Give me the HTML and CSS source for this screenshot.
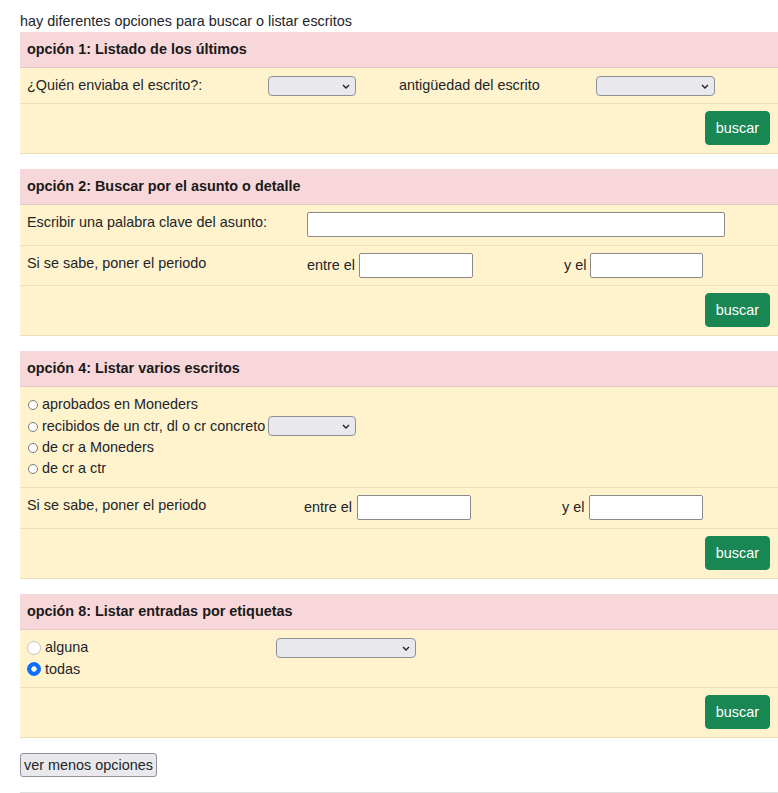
FILE: index.html
```html
<!DOCTYPE html>
<html lang="es">
<head>
<meta charset="utf-8">
<title>Buscar escritos</title>
<link rel="stylesheet" href="styles.css">
</head>
<body>
<div class="page">
  <p class="intro">hay diferentes opciones para buscar o listar escritos</p>

  <section class="opt">
    <div class="opt-head">opción 1: Listado de los últimos</div>
    <div class="row cols-1">
      <div class="c">¿Quién enviaba el escrito?:</div>
      <div class="c"><span class="sel-wrap"><select class="sel w88"></select><svg class="chev" width="8" height="5" viewBox="0 0 8 5"><path d="M1 1 L4 4 L7 1" fill="none" stroke="#222" stroke-width="1.4"/></svg></span></div>
      <div class="c">antigüedad del escrito</div>
      <div class="c"><span class="sel-wrap"><select class="sel w119"></select><svg class="chev" width="8" height="5" viewBox="0 0 8 5"><path d="M1 1 L4 4 L7 1" fill="none" stroke="#222" stroke-width="1.4"/></svg></span></div>
    </div>
    <div class="row row-action"><button class="btn-buscar" type="button">buscar</button></div>
  </section>

  <section class="opt">
    <div class="opt-head">opción 2: Buscar por el asunto o detalle</div>
    <div class="row cols-2 pb8">
      <div class="c">Escribir una palabra clave del asunto:</div>
      <div class="c span2"><input class="txt w418" type="text"></div>
    </div>
    <div class="row cols-2">
      <div class="c">Si se sabe, poner el periodo</div>
      <div class="c inl">entre el <input class="txt w114" type="text"></div>
      <div class="c inl">y el <input class="txt w113" type="text"></div>
    </div>
    <div class="row row-action"><button class="btn-buscar" type="button">buscar</button></div>
  </section>

  <section class="opt">
    <div class="opt-head">opción 4: Listar varios escritos</div>
    <div class="row row-list pb8">
      <label class="line"><input class="radio-sm" type="radio" name="o4">aprobados en Moneders</label>
      <label class="line line-sel"><input class="radio-sm" type="radio" name="o4">recibidos de un ctr, dl o cr concreto<span class="sel-wrap ml"><select class="sel w88"></select><svg class="chev" width="8" height="5" viewBox="0 0 8 5"><path d="M1 1 L4 4 L7 1" fill="none" stroke="#222" stroke-width="1.4"/></svg></span></label>
      <label class="line"><input class="radio-sm" type="radio" name="o4">de cr a Moneders</label>
      <label class="line"><input class="radio-sm" type="radio" name="o4">de cr a ctr</label>
    </div>
    <div class="row cols-4 pb8">
      <div class="c">Si se sabe, poner el periodo</div>
      <div class="c inl g5">entre el <input class="txt w114" type="text"></div>
      <div class="c inl g5">y el <input class="txt w114" type="text"></div>
    </div>
    <div class="row row-action"><button class="btn-buscar" type="button">buscar</button></div>
  </section>

  <section class="opt">
    <div class="opt-head">opción 8: Listar entradas por etiquetas</div>
    <div class="row cols-8">
      <div class="c">
        <label class="line2"><input class="radio-lg" type="radio" name="o8">alguna</label>
        <label class="line2"><input class="radio-lg" type="radio" name="o8" checked>todas</label>
      </div>
      <div class="c"><span class="sel-wrap"><select class="sel w140"></select><svg class="chev" width="8" height="5" viewBox="0 0 8 5"><path d="M1 1 L4 4 L7 1" fill="none" stroke="#222" stroke-width="1.4"/></svg></span></div>
    </div>
    <div class="row row-action"><button class="btn-buscar" type="button">buscar</button></div>
  </section>

  <button class="btn-menos" type="button">ver menos opciones</button>
  <hr class="sep">
</div>
</body>
</html>
```

FILE: styles.css
```css
html, body {
  margin: 0;
  padding: 0;
  background: #fff;
}

body {
  font-family: "Liberation Sans", Arial, sans-serif;
  font-size: 14.4px;
  line-height: 21px;
  color: #212529;
  overflow: hidden;
}

.page {
  padding: 11px 0 0 20px;
  width: 758px;
}

.intro {
  margin: 0;
  line-height: 21px;
}

.opt {
  margin-bottom: 15px;
  background: #fff3cd;
}

.opt-head {
  background: #f8d7da;
  font-weight: bold;
  padding: 7px;
  border-bottom: 1px solid #e6c8ca;
  color: #1a1a1a;
}

.row {
  padding: 7px 0;
  border-bottom: 1px solid #ece0bb;
}

.pb8 {
  padding-bottom: 8px;
}

.c {
  padding: 0 7px;
}

.cols-1 {
  display: grid;
  grid-template-columns: 241px 131px 197px 1fr;
}

.cols-2 {
  display: grid;
  grid-template-columns: 280px 257px 1fr;
}

.cols-4 {
  display: grid;
  grid-template-columns: 277px 258px 1fr;
}

.cols-8 {
  display: grid;
  grid-template-columns: 249px 1fr;
}

.span2 {
  grid-column: 2 / 4;
  display: flex;
}

.inl {
  display: flex;
  align-items: center;
  gap: 4px;
  white-space: nowrap;
}

.g5 {
  gap: 5px;
}

.row-action {
  display: flex;
  justify-content: flex-end;
  padding: 7px 8px 8px;
}

.row-list {
  padding-left: 7px;
  padding-right: 7px;
}

.line {
  display: flex;
  align-items: center;
  height: 21px;
  white-space: pre;
}

.line-sel {
  height: 22px;
}

.line2 {
  display: flex;
  align-items: center;
  height: 21.5px;
}

.sel-wrap {
  position: relative;
  display: inline-flex;
  margin-top: 1px;
  vertical-align: top;
}

.line-sel .sel-wrap {
  margin-top: 0;
}

.ml {
  margin-left: 3px;
}

.sel {
  appearance: none;
  -webkit-appearance: none;
  height: 20px;
  margin: 0;
  padding: 0 4px;
  box-sizing: border-box;
  border: 1px solid #8f8f97;
  border-radius: 4px;
  background: #e9e9ed;
  font-family: "Liberation Sans", Arial, sans-serif;
  font-size: 13.33px;
}

.chev {
  position: absolute;
  right: 6px;
  top: 8px;
  pointer-events: none;
}

.w88 { width: 88px; }
.w119 { width: 119px; }
.w140 { width: 140px; }

.txt {
  height: 25px;
  box-sizing: border-box;
  margin: 0;
  border: 1px solid #8a8a8a;
  border-radius: 2px;
  background: #fff;
  font-family: "Liberation Sans", Arial, sans-serif;
  font-size: 13.33px;
  padding: 1px 3px;
}

.w418 { width: 418px; }
.w114 { width: 114px; }
.w113 { width: 113px; }

.radio-sm {
  appearance: none;
  -webkit-appearance: none;
  width: 10px;
  height: 10px;
  margin: 1px 4px 0 1px;
  border: 1px solid #7a7a7a;
  border-radius: 50%;
  background: #fdfdfd;
  flex: none;
}

.radio-lg {
  appearance: none;
  -webkit-appearance: none;
  width: 14px;
  height: 14px;
  margin: 0 4px 0 0;
  border: 1px solid #c4c4c4;
  border-radius: 50%;
  background: #fff;
  flex: none;
}

.radio-lg:checked {
  border-color: #0d6efd;
  background: radial-gradient(circle, #fff 0 2.4px, #0d6efd 3px);
}

.btn-buscar {
  height: 34px;
  padding: 0 10px;
  border: 1px solid #198754;
  border-radius: 4px;
  background: #198754;
  color: #fff;
  font-family: "Liberation Sans", Arial, sans-serif;
  font-size: 14.4px;
  line-height: 21px;
  cursor: pointer;
}

.btn-menos {
  display: block;
  width: 137px;
  height: 24px;
  margin: 0;
  padding: 0;
  border: 1px solid #8f8f97;
  border-radius: 3px;
  background: #e9e9ed;
  font-family: "Liberation Sans", Arial, sans-serif;
  font-size: 14.4px;
  color: #212529;
}

.sep {
  margin: 15px 0 0;
  border: 0;
  border-top: 1px solid #dedede;
}
```
